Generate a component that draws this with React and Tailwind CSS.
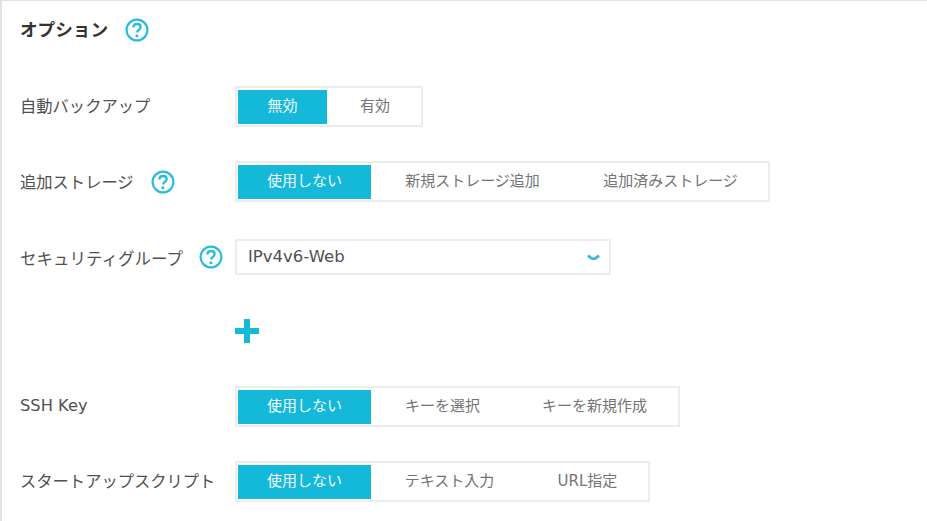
const font = { fontFamily: '"DejaVu Sans", "Noto Sans CJK JP", sans-serif' };

const HelpIcon = ({ className }) => (
  <svg className={className} width="24" height="24" viewBox="0 0 24 24" fill="none">
    <circle cx="12" cy="12" r="10.4" stroke="#2bbbdc" strokeWidth="2.2" />
    <path d="M8.4 9.6c0-2.2 1.600-3.600 3.700-3.600s3.500 1.300 3.500 3c0 1.500-.8 2.300-1.900 3.100-.9.600-1.500 1.100-1.500 2.300" stroke="#2bbbdc" strokeWidth="2.4" />
    <circle cx="11.900" cy="17.800" r="1.500" fill="#2bbbdc" />
  </svg>
);

const Segment = ({ items, className }) => (
  <div className={`flex h-[41px] border-2 border-[#ecedf0] pl-[1px] pt-[2px] pb-[1px] ${className}`}>
    {items.map((item, i) => (
      <div
        key={item.label}
        className={`flex shrink-0 items-center justify-center pb-[1px] text-[15px] ${item.w} ${i === 0 ? 'bg-[#14b8d9] text-[#f2fbfd]' : 'text-[#747474]'}`}
      >
        {item.label}
      </div>
    ))}
  </div>
);

export default function App() {
  return (
    <div style={font} className="w-[927px] h-[521px] overflow-hidden bg-white border-l-2 border-t border-[#e2e2e2] pl-[18px] text-[#505050]">
      <div className="flex items-center h-[58px]">
        <h2 className="text-[17.600px] font-bold text-[#333333]">オプション</h2>
        <HelpIcon className="ml-[17px]" />
      </div>

      <div className="flex items-center mt-[27px]">
        <div className="w-[215px] pt-[1px] text-[16.300px]">自動バックアップ</div>
        <Segment
          className="w-[188px]"
          items={[
            { label: '無効', w: 'w-[89px]' },
            { label: '有効', w: 'w-[96px]' },
          ]}
        />
      </div>

      <div className="flex items-center mt-[34px]">
        <div className="flex items-center w-[215px] text-[16.300px]">
          <span className="pt-[4px]">追加ストレージ</span>
          <HelpIcon className="ml-[17px]" />
        </div>
        <Segment
          className="w-[535px]"
          items={[
            { label: '使用しない', w: 'w-[133px]' },
            { label: '新規ストレージ追加', w: 'w-[203px]' },
            { label: '追加済みストレージ', w: 'w-[193px]' },
          ]}
        />
      </div>

      <div className="flex items-center mt-[37px]">
        <div className="flex items-center w-[215px] text-[16.500px]">
          <span className="pt-[6px]">セキュリティグループ</span>
          <HelpIcon className="ml-[16px]" />
        </div>
        <div className="flex items-center justify-between w-[376px] h-[36px] border-2 border-[#ecedf0] pl-[11px] pr-[9px] text-[16.500px]">
          IPv4v6-Web
          <svg width="13" height="7" viewBox="0 0 13 7" fill="none">
            <path d="M1 1.500c2.200 2.200 3.800 3.300 5.500 3.300s3.300-1.100 5.500-3.300" stroke="#2bbbdc" strokeWidth="2.600" />
          </svg>
        </div>
      </div>

      <div className="flex ml-[215px] mt-[44px]">
        <svg width="24" height="24" viewBox="0 0 24 24">
          <path d="M9 0h6v9h9v6h-9v9H9v-9H0V9h9z" fill="#14b8d9" />
        </svg>
      </div>

      <div className="flex items-center mt-[43px]">
        <div className="w-[215px] text-[16.300px]">SSH Key</div>
        <Segment
          className="w-[445px]"
          items={[
            { label: '使用しない', w: 'w-[133px]' },
            { label: 'キーを選択', w: 'w-[143px]' },
            { label: 'キーを新規作成', w: 'w-[161px]' },
          ]}
        />
      </div>

      <div className="flex items-center mt-[34px]">
        <div className="w-[215px] pt-[2px] text-[16.300px]">スタートアップスクリプト</div>
        <Segment
          className="w-[415px]"
          items={[
            { label: '使用しない', w: 'w-[133px]' },
            { label: 'テキスト入力', w: 'w-[157px]' },
            { label: 'URL指定', w: 'w-[119px]' },
          ]}
        />
      </div>
    </div>
  );
}
